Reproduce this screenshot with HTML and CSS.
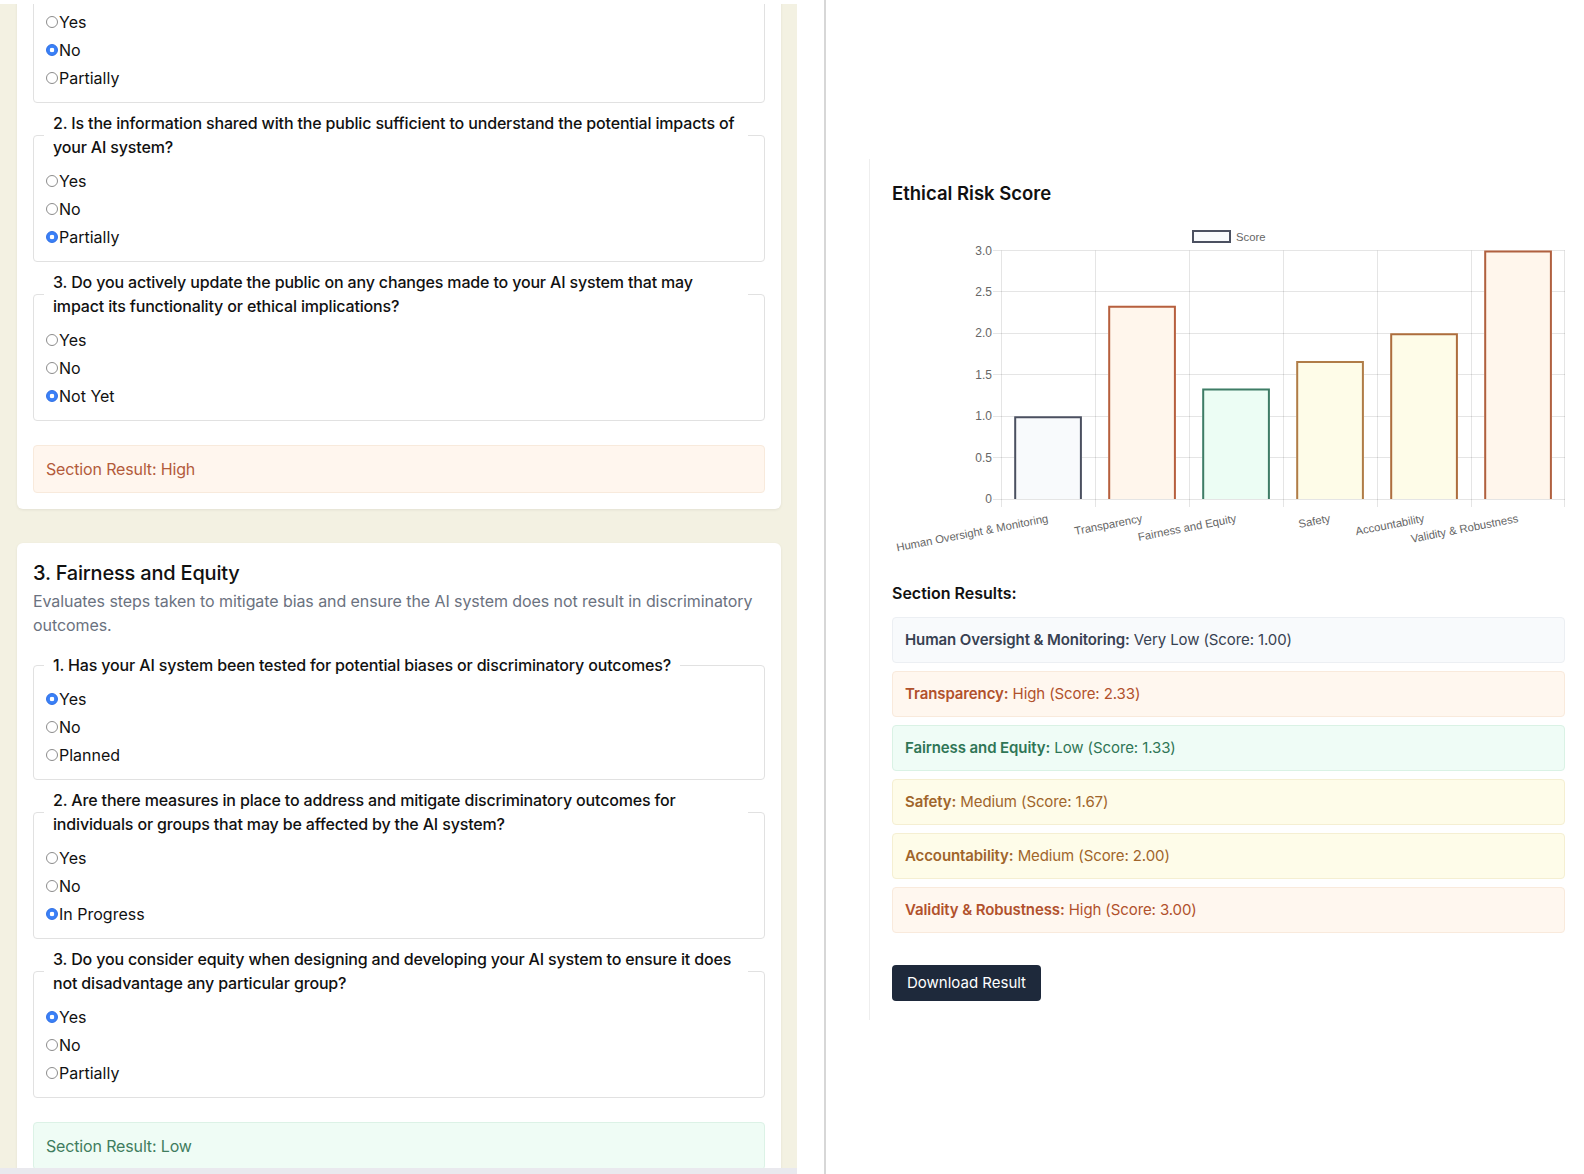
FILE: index.html
```html
<!DOCTYPE html>
<html lang="en">
<head>
<meta charset="utf-8">
<title>Ethical Risk Assessment</title>
<link rel="stylesheet" href="styles.css">
</head>
<body>
<div class="page">
  <div class="left-col">
    <div class="left-pane">
      <section class="card card-cut">
        <div class="questions">
          <fieldset class="q q-cut">
            <div class="opts">
              <label class="opt"><input type="radio" name="t1">Yes</label>
              <label class="opt"><input type="radio" name="t1" checked>No</label>
              <label class="opt"><input type="radio" name="t1">Partially</label>
            </div>
          </fieldset>
          <fieldset class="q">
            <legend>2. Is the information shared with the public sufficient to understand the potential impacts of your AI system?</legend>
            <div class="opts">
              <label class="opt"><input type="radio" name="t2">Yes</label>
              <label class="opt"><input type="radio" name="t2">No</label>
              <label class="opt"><input type="radio" name="t2" checked>Partially</label>
            </div>
          </fieldset>
          <fieldset class="q">
            <legend>3. Do you actively update the public on any changes made to your AI system that may impact its functionality or ethical implications?</legend>
            <div class="opts">
              <label class="opt"><input type="radio" name="t3">Yes</label>
              <label class="opt"><input type="radio" name="t3">No</label>
              <label class="opt"><input type="radio" name="t3" checked>Not Yet</label>
            </div>
          </fieldset>
        </div>
        <div class="result result-high">Section Result: High</div>
      </section>

      <section class="card">
        <h2 class="card-title">3. Fairness and Equity</h2>
        <p class="card-desc">Evaluates steps taken to mitigate bias and ensure the AI system does not result in discriminatory outcomes.</p>
        <div class="questions">
          <fieldset class="q">
            <legend>1. Has your AI system been tested for potential biases or discriminatory outcomes?</legend>
            <div class="opts">
              <label class="opt"><input type="radio" name="f1" checked>Yes</label>
              <label class="opt"><input type="radio" name="f1">No</label>
              <label class="opt"><input type="radio" name="f1">Planned</label>
            </div>
          </fieldset>
          <fieldset class="q">
            <legend>2. Are there measures in place to address and mitigate discriminatory outcomes for individuals or groups that may be affected by the AI system?</legend>
            <div class="opts">
              <label class="opt"><input type="radio" name="f2">Yes</label>
              <label class="opt"><input type="radio" name="f2">No</label>
              <label class="opt"><input type="radio" name="f2" checked>In Progress</label>
            </div>
          </fieldset>
          <fieldset class="q">
            <legend>3. Do you consider equity when designing and developing your AI system to ensure it does not disadvantage any particular group?</legend>
            <div class="opts">
              <label class="opt"><input type="radio" name="f3" checked>Yes</label>
              <label class="opt"><input type="radio" name="f3">No</label>
              <label class="opt"><input type="radio" name="f3">Partially</label>
            </div>
          </fieldset>
        </div>
        <div class="result result-low">Section Result: Low</div>
      </section>
    </div>
    <div class="hscroll"></div>
  </div>

  <div class="divider"></div>

  <div class="right-pane">
    <div class="results-card">
      <h2 class="chart-title">Ethical Risk Score</h2>
      <svg class="chart" width="673" height="345" viewBox="0 0 673 345" xmlns="http://www.w3.org/2000/svg">
        <g class="legend">
          <rect x="301" y="16" width="37" height="11" fill="#f8fafc" stroke="#4b5060" stroke-width="2"/>
          <text x="344" y="21.5" class="tick">Score</text>
        </g>
        <g stroke="rgba(0,0,0,0.1)" stroke-width="1" fill="none">
          <path d="M101 35.5H673M101 76.5H673M101 118.5H673M101 159.5H673M101 201.5H673M101 242.5H673M101 284.5H673"/>
          <path d="M109.5 35.5V292M203.5 35.5V292M297.5 35.5V292M391.5 35.5V292M485.5 35.5V292M579.5 35.5V292M672.5 35.5V292"/>
        </g>
        <g class="yticks">
          <text x="100" y="35.5">3.0</text>
          <text x="100" y="76.9">2.5</text>
          <text x="100" y="118.3">2.0</text>
          <text x="100" y="159.8">1.5</text>
          <text x="100" y="201.2">1.0</text>
          <text x="100" y="242.6">0.5</text>
          <text x="100" y="284">0</text>
        </g>
        <g class="bars" stroke-width="2">
          <rect x="122.2" y="201.2" width="67.7" height="82.8" fill="#f8fafc" stroke="none"/>
          <path d="M123.2 284V202.2H188.9V284" fill="none" stroke="#4b5060"/>
          <rect x="216.2" y="90.7" width="67.7" height="193.3" fill="#fff6ec" stroke="none"/>
          <path d="M217.2 284V91.7H282.9V284" fill="none" stroke="#b65f3e"/>
          <rect x="310.2" y="173.6" width="67.7" height="110.4" fill="#ecfdf4" stroke="none"/>
          <path d="M311.2 284V174.6H376.9V284" fill="none" stroke="#3f7c66"/>
          <rect x="404.2" y="145.9" width="67.7" height="138.1" fill="#fefce8" stroke="none"/>
          <path d="M405.2 284V146.9H470.9V284" fill="none" stroke="#b07c47"/>
          <rect x="498.2" y="118.3" width="67.7" height="165.7" fill="#fefce8" stroke="none"/>
          <path d="M499.2 284V119.3H564.9V284" fill="none" stroke="#ad6d3e"/>
          <rect x="592.2" y="35.5" width="67.7" height="248.5" fill="#fff6ec" stroke="none"/>
          <path d="M593.2 284V36.5H658.9V284" fill="none" stroke="#b0603f"/>
        </g>
        <g class="xticks">
          <text transform="translate(156 303) rotate(-11)">Human Oversight &amp; Monitoring</text>
          <text transform="translate(250 303) rotate(-11)">Transparency</text>
          <text transform="translate(344 303) rotate(-11)">Fairness and Equity</text>
          <text transform="translate(438 303) rotate(-11)">Safety</text>
          <text transform="translate(532 303) rotate(-11)">Accountability</text>
          <text transform="translate(626 303) rotate(-11)">Validity &amp; Robustness</text>
        </g>
      </svg>

      <h3 class="results-title">Section Results:</h3>
      <div class="rows">
        <div class="row row-vlow"><b>Human Oversight &amp; Monitoring:</b> Very Low (Score: 1.00)</div>
        <div class="row row-high"><b>Transparency:</b> High (Score: 2.33)</div>
        <div class="row row-low"><b>Fairness and Equity:</b> Low (Score: 1.33)</div>
        <div class="row row-med"><b>Safety:</b> Medium (Score: 1.67)</div>
        <div class="row row-med"><b>Accountability:</b> Medium (Score: 2.00)</div>
        <div class="row row-high"><b>Validity &amp; Robustness:</b> High (Score: 3.00)</div>
      </div>
      <button class="download" type="button">Download Result</button>
    </div>
  </div>
</div>
</body>
</html>
```

FILE: styles.css
```css
* { box-sizing: border-box; }

body {
  margin: 0;
  font-family: Inter, "Noto Sans", sans-serif;
  color: #111111;
  background: #ffffff;
}

.page {
  display: flex;
  height: 1174px;
  overflow: hidden;
}

/* ---------- left column ---------- */
.left-col {
  width: 797px;
  flex: none;
  padding-top: 4px;
  display: flex;
  flex-direction: column;
}

.left-pane {
  height: 1164px;
  flex: none;
  overflow: hidden;
  background: #f3f1e2;
  padding: 0 16px 0 17px;
  display: flex;
  flex-direction: column;
  gap: 34px;
}

.hscroll {
  height: 6px;
  flex: none;
  background: #e9e9ee;
}

.card {
  flex: none;
  background: #ffffff;
  border-radius: 6px;
  box-shadow: 0 1px 3px rgba(0, 0, 0, 0.07);
  padding: 16px;
}

.card-cut {
  margin-top: -21px;
}

.card-title {
  margin: 0 0 2px;
  font-size: 20px;
  line-height: 28px;
  font-weight: 500;
  letter-spacing: -0.2px;
  color: #111111;
}

.card-desc {
  margin: 0 0 16px;
  font-size: 16px;
  line-height: 24px;
  letter-spacing: -0.08px;
  color: #6b7280;
}

.questions {
  display: flex;
  flex-direction: column;
  gap: 8px;
}

.q {
  margin: 0;
  min-width: 0;
  border: 1px solid #e1e1e1;
  border-radius: 4px;
  padding: 10px 16px 12px 10px;
}

.q legend {
  padding: 0 9px;
  font-size: 16px;
  line-height: 24px;
  font-weight: 500;
  letter-spacing: -0.16px;
  color: #111111;
}

.opts {
  display: flex;
  flex-direction: column;
  gap: 4px;
}

.opt {
  display: flex;
  align-items: center;
  height: 24px;
  font-size: 16px;
  line-height: 24px;
  color: #111111;
}

.opt input {
  appearance: none;
  -webkit-appearance: none;
  width: 12px;
  height: 12px;
  margin: 0 1px 0 2px;
  border: 1px solid #8c8c8c;
  border-radius: 50%;
  background: #ffffff;
  flex: none;
}

.opt input:checked {
  border-color: #2f6fe4;
  background: radial-gradient(circle at center, #ffffff 0 2px, #3a80f7 2.6px);
}

.result {
  margin-top: 24px;
  border-radius: 4px;
  padding: 11px 12px;
  font-size: 16px;
  line-height: 24px;
  letter-spacing: -0.15px;
  border: 1px solid transparent;
}

.result-high {
  background: #fff6ee;
  border-color: #f8eadc;
  color: #b35b3b;
}

.result-low {
  background: #effcf5;
  border-color: #dcf2e6;
  color: #3f7d5e;
}

/* ---------- divider ---------- */
.divider {
  width: 2px;
  flex: none;
  margin-left: 27px;
  background: #d7d7d7;
}

/* ---------- right pane ---------- */
.right-pane {
  flex: 1;
  overflow: hidden;
}

.results-card {
  margin: 159px 0 0 43px;
  border-left: 1px solid #eeeeee;
  padding: 20px 19px 19px 22px;
}

.chart-title {
  margin: 0;
  font-size: 18.5px;
  line-height: 28px;
  font-weight: 600;
  color: #111111;
}

.chart {
  display: block;
  margin-top: 8px;
  overflow: visible;
}

.chart text {
  font-family: "Liberation Sans", Arial, sans-serif;
  font-size: 12px;
  fill: #666666;
}

.chart .tick {
  font-size: 11.3px;
  dominant-baseline: central;
}

.yticks text {
  text-anchor: end;
  dominant-baseline: central;
}

.chart .xticks text {
  font-size: 11.3px;
  text-anchor: end;
  dominant-baseline: central;
}

.results-title {
  margin: 21px 0 12px;
  font-size: 16px;
  line-height: 24px;
  font-weight: 600;
  color: #111111;
}

.rows {
  display: flex;
  flex-direction: column;
  gap: 8px;
}

.row {
  border: 1px solid transparent;
  border-radius: 4px;
  padding: 10px 12px;
  font-size: 15px;
  line-height: 24px;
  letter-spacing: -0.1px;
}

.row b {
  font-weight: 600;
}

.row-vlow {
  background: #f8fafc;
  border-color: #eceff3;
  color: #374151;
}

.row-high {
  background: #fff7ef;
  border-color: #f9eadc;
  color: #b1512c;
}

.row-low {
  background: #effcf6;
  border-color: #daf2e5;
  color: #2f7656;
}

.row-med {
  background: #fefce9;
  border-color: #f5efd2;
  color: #a0652b;
}

.download {
  display: block;
  margin-top: 32px;
  height: 36px;
  padding: 0 15px;
  border: none;
  border-radius: 4px;
  background: #1e293b;
  color: #ffffff;
  font-family: Inter, "Noto Sans", sans-serif;
  font-size: 15px;
  line-height: 36px;
}
```
